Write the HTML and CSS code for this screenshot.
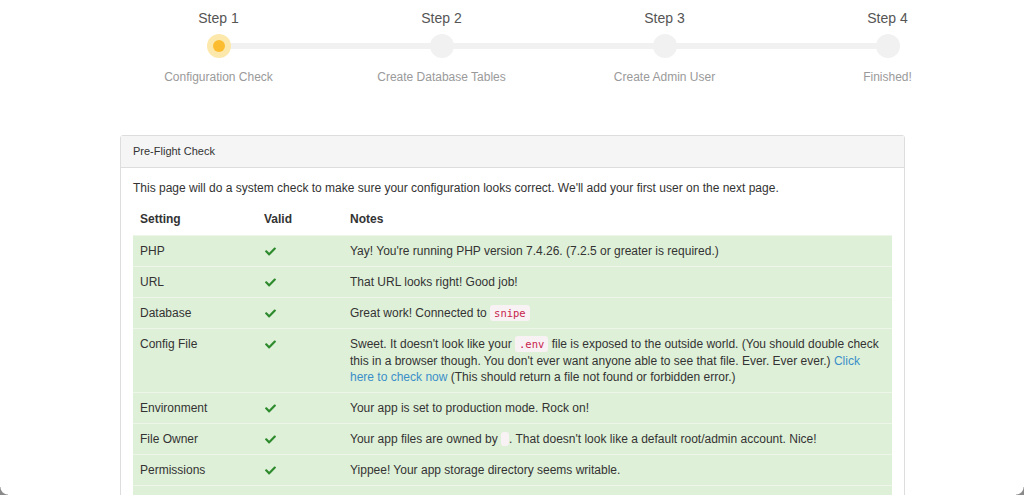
FILE: index.html
```html
<!DOCTYPE html>
<html>
<head>
<meta charset="utf-8">
<link rel="stylesheet" href="styles.css">
</head>
<body>
<div class="page">
  <div class="stepper">
    <div class="step active">
      <div class="step-title">Step 1</div>
      <div class="step-track"><span class="step-dot"><span class="step-inner"></span></span></div>
      <div class="step-label">Configuration Check</div>
    </div>
    <div class="step">
      <div class="step-title">Step 2</div>
      <div class="step-track"><span class="step-dot"></span></div>
      <div class="step-label">Create Database Tables</div>
    </div>
    <div class="step">
      <div class="step-title">Step 3</div>
      <div class="step-track"><span class="step-dot"></span></div>
      <div class="step-label">Create Admin User</div>
    </div>
    <div class="step last">
      <div class="step-title">Step 4</div>
      <div class="step-track"><span class="step-dot"></span></div>
      <div class="step-label">Finished!</div>
    </div>
  </div>

  <div class="panel">
    <div class="panel-heading">Pre-Flight Check</div>
    <div class="panel-body">
      <p class="intro">This page will do a system check to make sure your configuration looks correct. We'll add your first user on the next page.</p>
      <table class="checks">
        <thead>
          <tr><th class="c-set">Setting</th><th class="c-valid">Valid</th><th>Notes</th></tr>
        </thead>
        <tbody>
          <tr><td>PHP</td><td><svg class="ok" viewBox="0 0 512 512"><path d="M173.9 439.4 7.5 273c-10-10-10-26.2 0-36.2l36.2-36.2c10-10 26.2-10 36.2 0L192 312.7 432.1 72.6c10-10 26.2-10 36.2 0l36.2 36.2c10 10 10 26.2 0 36.2L210.1 439.4c-10 10-26.2 10-36.2 0z"/></svg></td><td>Yay! You're running PHP version 7.4.26. (7.2.5 or greater is required.)</td></tr>
          <tr><td>URL</td><td><svg class="ok" viewBox="0 0 512 512"><path d="M173.9 439.4 7.5 273c-10-10-10-26.2 0-36.2l36.2-36.2c10-10 26.2-10 36.2 0L192 312.7 432.1 72.6c10-10 26.2-10 36.2 0l36.2 36.2c10 10 10 26.2 0 36.2L210.1 439.4c-10 10-26.2 10-36.2 0z"/></svg></td><td>That URL looks right! Good job!</td></tr>
          <tr><td>Database</td><td><svg class="ok" viewBox="0 0 512 512"><path d="M173.9 439.4 7.5 273c-10-10-10-26.2 0-36.2l36.2-36.2c10-10 26.2-10 36.2 0L192 312.7 432.1 72.6c10-10 26.2-10 36.2 0l36.2 36.2c10 10 10 26.2 0 36.2L210.1 439.4c-10 10-26.2 10-36.2 0z"/></svg></td><td>Great work! Connected to <code>snipe</code></td></tr>
          <tr><td>Config File</td><td><svg class="ok" viewBox="0 0 512 512"><path d="M173.9 439.4 7.5 273c-10-10-10-26.2 0-36.2l36.2-36.2c10-10 26.2-10 36.2 0L192 312.7 432.1 72.6c10-10 26.2-10 36.2 0l36.2 36.2c10 10 10 26.2 0 36.2L210.1 439.4c-10 10-26.2 10-36.2 0z"/></svg></td><td>Sweet. It doesn't look like your <code>.env</code> file is exposed to the outside world. (You should double check this in a browser though. You don't ever want anyone able to see that file. Ever. Ever ever.) <a href="#">Click here to check now</a> (This should return a file not found or forbidden error.)</td></tr>
          <tr><td>Environment</td><td><svg class="ok" viewBox="0 0 512 512"><path d="M173.9 439.4 7.5 273c-10-10-10-26.2 0-36.2l36.2-36.2c10-10 26.2-10 36.2 0L192 312.7 432.1 72.6c10-10 26.2-10 36.2 0l36.2 36.2c10 10 10 26.2 0 36.2L210.1 439.4c-10 10-26.2 10-36.2 0z"/></svg></td><td>Your app is set to production mode. Rock on!</td></tr>
          <tr><td>File Owner</td><td><svg class="ok" viewBox="0 0 512 512"><path d="M173.9 439.4 7.5 273c-10-10-10-26.2 0-36.2l36.2-36.2c10-10 26.2-10 36.2 0L192 312.7 432.1 72.6c10-10 26.2-10 36.2 0l36.2 36.2c10 10 10 26.2 0 36.2L210.1 439.4c-10 10-26.2 10-36.2 0z"/></svg></td><td>Your app files are owned by <code class="empty"></code>. That doesn't look like a default root/admin account. Nice!</td></tr>
          <tr><td>Permissions</td><td><svg class="ok" viewBox="0 0 512 512"><path d="M173.9 439.4 7.5 273c-10-10-10-26.2 0-36.2l36.2-36.2c10-10 26.2-10 36.2 0L192 312.7 432.1 72.6c10-10 26.2-10 36.2 0l36.2 36.2c10 10 10 26.2 0 36.2L210.1 439.4c-10 10-26.2 10-36.2 0z"/></svg></td><td>Yippee! Your app storage directory seems writable.</td></tr>
          <tr><td>Debug</td><td><svg class="ok" viewBox="0 0 512 512"><path d="M173.9 439.4 7.5 273c-10-10-10-26.2 0-36.2l36.2-36.2c10-10 26.2-10 36.2 0L192 312.7 432.1 72.6c10-10 26.2-10 36.2 0l36.2 36.2c10 10 10 26.2 0 36.2L210.1 439.4c-10 10-26.2 10-36.2 0z"/></svg></td><td>Awesomesauce. Debug is either turned off, or you're running this in a non-production environment.</td></tr>
        </tbody>
      </table>
    </div>
  </div>
</div>
<div class="corner corner-l"></div>
<div class="corner corner-r"></div>
</body>
</html>
```

FILE: styles.css
```css
* { box-sizing: border-box; }
html, body {
  margin: 0;
  padding: 0;
  background: #ffffff;
  overflow: hidden;
}
body {
  font-family: "Liberation Sans", Arial, sans-serif;
  color: #333333;
  font-size: 12px;
}
.page {
  height: 495px;
  overflow: hidden;
}
.stepper {
  display: flex;
  margin-left: 107px;
  width: 892px;
  padding-top: 10px;
}
.step {
  flex: 1 1 0;
  display: flex;
  flex-direction: column;
  align-items: center;
}
.step-title {
  font-size: 14px;
  color: #555555;
  line-height: 17px;
}
.step-track {
  position: relative;
  width: 100%;
  height: 24px;
  margin-top: 7px;
  display: flex;
  justify-content: center;
}
.step-track::before {
  content: "";
  position: absolute;
  left: 50%;
  width: 100%;
  top: 9px;
  height: 6px;
  background: #f1f1f1;
}
.step.last .step-track::before { display: none; }
.step-dot {
  position: relative;
  width: 24px;
  height: 24px;
  border-radius: 50%;
  background: #f1f1f1;
  display: flex;
  align-items: center;
  justify-content: center;
}
.step.active .step-dot { background: #fde8ac; }
.step-inner {
  width: 12px;
  height: 12px;
  border-radius: 50%;
  background: #fbbd2f;
}
.step-label {
  margin-top: 12px;
  font-size: 12px;
  color: #9a9a9a;
}
.panel {
  margin: 51px 0 0 120px;
  width: 785px;
  border: 1px solid #dddddd;
  border-radius: 3px;
}
.panel-heading {
  background: #f5f5f5;
  border-bottom: 1px solid #dddddd;
  height: 32px;
  padding: 9px 12px 0;
  font-size: 11px;
  color: #333333;
}
.panel-body {
  padding: 13px 12px 0;
}
.intro {
  margin: 0 0 7px;
  font-size: 12px;
  line-height: 15px;
}
.checks {
  width: 100%;
  border-collapse: collapse;
  font-size: 12px;
}
.checks th {
  text-align: left;
  font-weight: bold;
  padding: 8px 7px 8px;
  line-height: 16px;
  font-size: 12px;
}
.c-set { width: 124px; }
.c-valid { width: 86px; }
.checks td {
  background: #dff0d8;
  padding: 7px 7px 6.5px;
  line-height: 16.5px;
  vertical-align: top;
  border-top: 1px solid #eef6ea;
}
.ok {
  display: block;
  width: 11px;
  height: 11px;
  fill: #2d8a2d;
  margin-top: 3px;
  margin-left: 1px;
}
code {
  font-family: "DejaVu Sans Mono", "Liberation Mono", monospace;
  font-size: 10.5px;
  line-height: 12px;
  color: #c7254e;
  background: #f9f2f4;
  border-radius: 3px;
  padding: 2px 4px;
}
code.empty {
  display: inline-block;
  width: 8px;
  height: 14px;
  padding: 0;
  vertical-align: -3px;
}
a {
  color: #3a8fc9;
  text-decoration: none;
}
.corner {
  position: fixed;
  bottom: 0;
  width: 8px;
  height: 8px;
}
.corner-l {
  left: 0;
  background: radial-gradient(circle at 8px 0, transparent 7px, #8a8a8a 8px);
}
.corner-r {
  right: 0;
  background: radial-gradient(circle at 0 0, transparent 7px, #8a8a8a 8px);
}
```
